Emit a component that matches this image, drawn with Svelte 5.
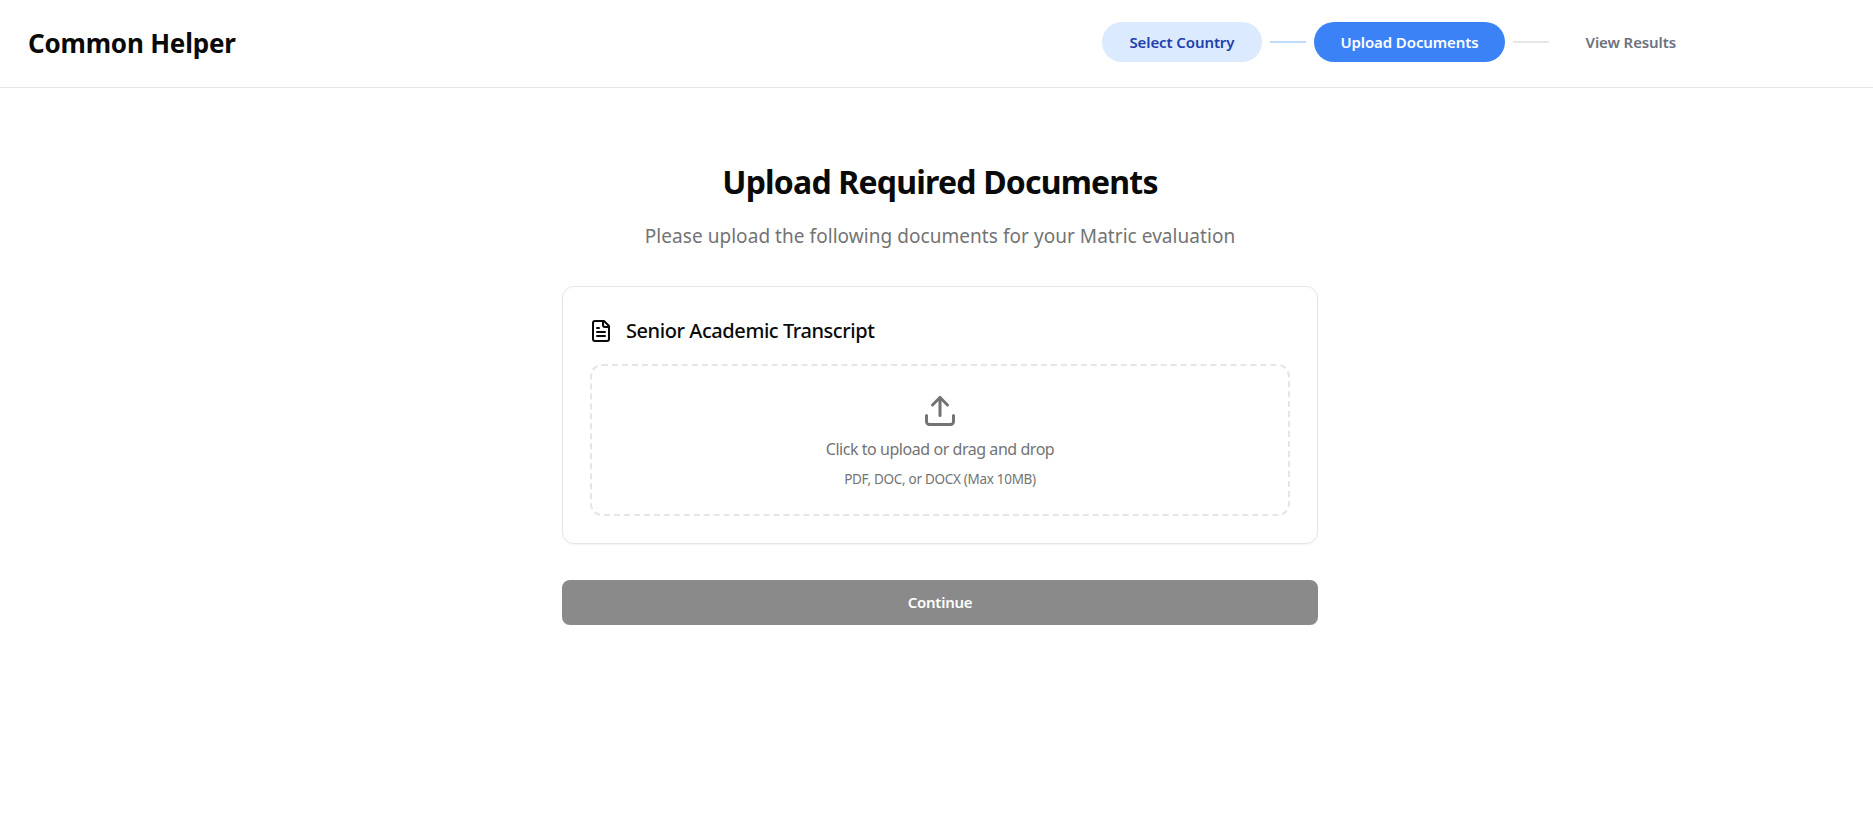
<script lang="ts">
  const steps = [
    { label: 'Select Country', state: 'done' },
    { label: 'Upload Documents', state: 'active' },
    { label: 'View Results', state: 'todo' }
  ];
</script>

<header class="topbar">
  <h1 class="logo">Common Helper</h1>
  <nav class="steps">
    {#each steps as s, i}
      {#if i > 0}<span class="line {steps[i - 1].state}"></span>{/if}
      <span class="step {s.state}">{s.label}</span>
    {/each}
  </nav>
</header>

<main class="page">
  <div class="column">
    <h2 class="title">Upload Required Documents</h2>
    <p class="sub">Please upload the following documents for your Matric evaluation</p>

    <section class="card">
      <div class="card-head">
        <svg width="24" height="24" viewBox="0 0 24 24" fill="none" stroke="#0a0a0a" stroke-width="2" stroke-linecap="round" stroke-linejoin="round">
          <path d="M15 2H6a2 2 0 0 0-2 2v16a2 2 0 0 0 2 2h12a2 2 0 0 0 2-2V7z" />
          <path d="M14 2v4a2 2 0 0 0 2 2h4" />
          <path d="M10 9H8" />
          <path d="M16 13H8" />
          <path d="M16 17H8" />
        </svg>
        <span>Senior Academic Transcript</span>
      </div>
      <div class="drop">
        <svg width="36" height="36" viewBox="0 0 24 24" fill="none" stroke="#737373" stroke-width="2" stroke-linecap="round" stroke-linejoin="round">
          <path d="M21 15v4a2 2 0 0 1-2 2H5a2 2 0 0 1-2-2v-4" />
          <polyline points="17 8 12 3 7 8" />
          <line x1="12" y1="3" x2="12" y2="15" />
        </svg>
        <p class="drop-main">Click to upload or drag and drop</p>
        <p class="drop-hint">PDF, DOC, or DOCX (Max 10MB)</p>
      </div>
    </section>

    <button class="continue">Continue</button>
  </div>
</main>

<style>
  :global(body) {
    background: #fff;
    font-family: "Noto Sans", "Open Sans", sans-serif;
    color: #0a0a0a;
  }
  .topbar {
    display: flex; align-items: center; justify-content: space-between;
    height: 88px; padding: 0 170px 3px 28px; box-sizing: border-box;
    border-bottom: 1px solid #e5e5e5;
  }
  .logo { margin: 2px 0 0; font-size: 26px; font-weight: 700; letter-spacing: -0.2px; }
  .steps { display: flex; align-items: center; gap: 8px; }
  .step {
    display: flex; align-items: center; height: 40px;
    padding: 0 27px; border-radius: 20px;
    font-size: 15px; font-weight: 600; white-space: nowrap; letter-spacing: -0.1px;
  }
  .step.done { background: #dbeafe; color: #1e40af; padding: 0 27.5px; }
  .step.active { background: #3b82f6; color: #fff; padding: 0 26.5px; }
  .step.todo { color: #6b7280; padding-left: 28.5px; }
  .line { width: 36px; height: 2px; background: #e5e7eb; }
  .line.done { background: #bfdbfe; }

  .page { display: flex; justify-content: center; padding: 69px 0 0 7px; }
  .column { width: 756px; display: flex; flex-direction: column; }
  .title { margin: 0; text-align: center; font-size: 32px; line-height: 50px; font-weight: 700; letter-spacing: -0.8px; }
  .sub { margin: 15px 0 0; text-align: center; font-size: 19px; line-height: 28px; color: #737373; letter-spacing: 0.05px; }
  .card {
    margin-top: 36px; padding: 27px;
    border: 1px solid #e5e5e5; border-radius: 12px;
    box-shadow: 0 1px 2px rgba(0, 0, 0, 0.05);
  }
  .card-head {
    display: flex; align-items: center; gap: 13px;
    height: 34px; font-size: 20px; font-weight: 500; letter-spacing: -0.43px;
  }
  .card-head svg { margin-left: -1px; }
  .card-head span { padding-bottom: 2px; }
  .drop {
    margin-top: 16px; height: 121px; padding-top: 27px;
    border: 2px dashed #e5e5e5; border-radius: 12px;
    display: flex; flex-direction: column; align-items: center;
  }
  .drop svg { display: block; }
  .drop-main { margin: 8px 0 0; font-size: 16px; line-height: 24px; color: #737373; letter-spacing: -0.45px; }
  .drop-hint { margin: 8px 0 0; font-size: 13.5px; line-height: 20px; color: #737373; letter-spacing: -0.3px; }
  .continue {
    margin-top: 36px; height: 45px; padding: 0 0 2px; border: none; border-radius: 8px;
    background: #8a8a8a; color: #fff;
    box-shadow: 0 1px 2px rgba(0, 0, 0, 0.05);
    font-family: inherit; font-size: 15px; font-weight: 600; letter-spacing: -0.25px;
  }
</style>
